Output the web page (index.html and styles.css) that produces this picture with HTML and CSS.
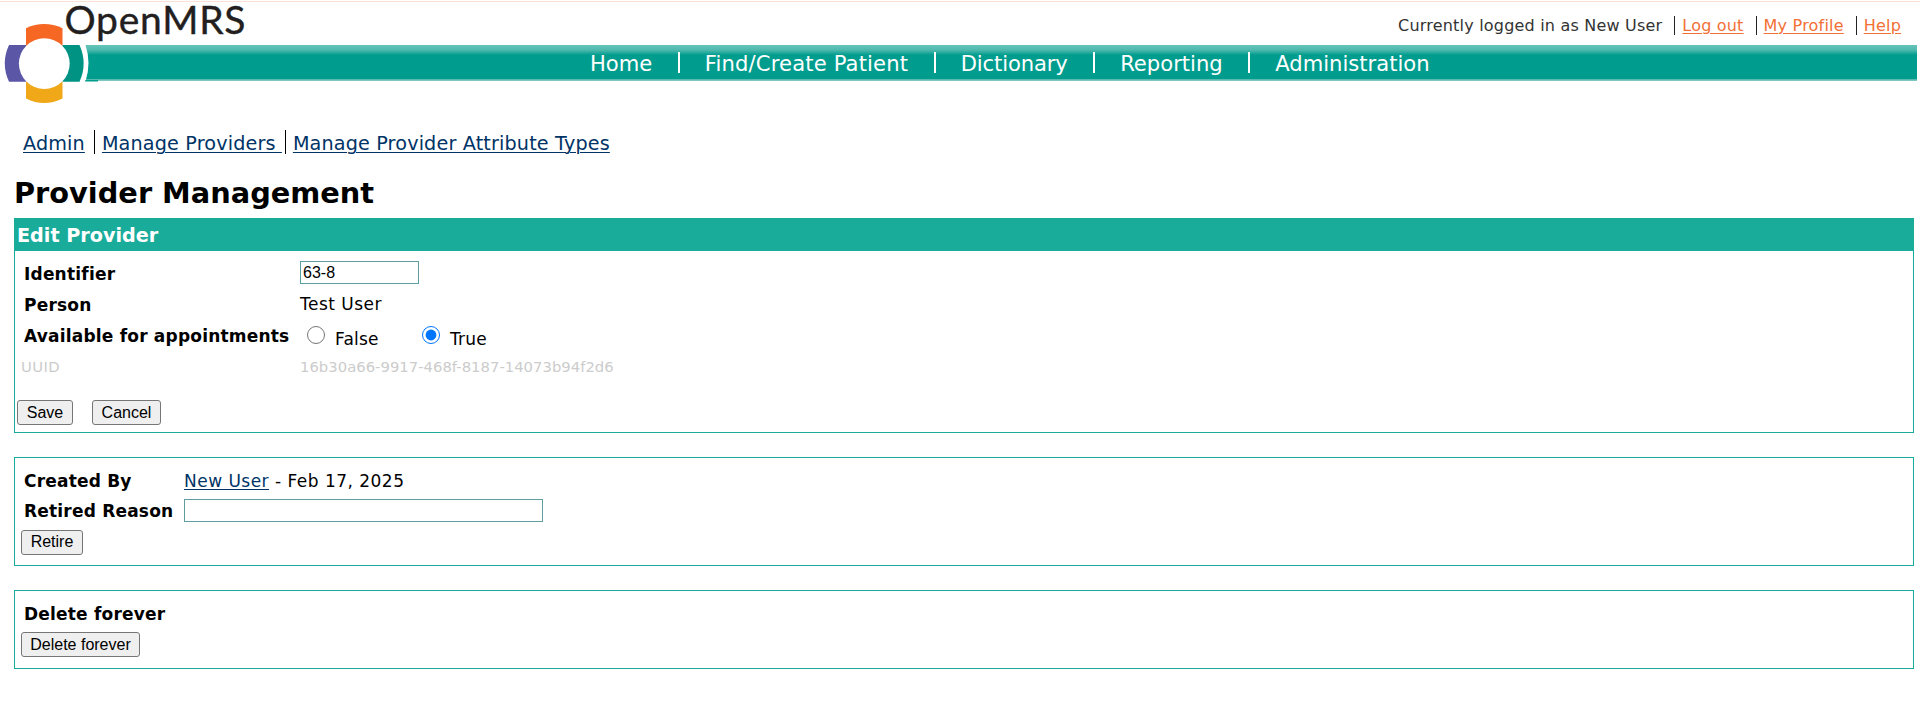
FILE: index.html
```html
<!DOCTYPE html>
<html lang="en">
<head>
    <meta charset="UTF-8">
    <meta name="viewport" content="width=device-width, initial-scale=1.0">
    <title>OpenMRS - Provider Management</title>
    <link rel="stylesheet" href="styles.css">
</head>
<body>
    <div class="page-header">
        <div class="user-bar">
            <span class="user-item">Currently logged in as New User</span>
            <span class="user-item"><a href="#">Log out</a></span>
            <span class="user-item"><a href="#">My Profile</a></span>
            <span class="user-item"><a href="#">Help</a></span>
        </div>

        <ul class="nav-bar">
            <li><a href="#">Home</a></li>
            <li class="nav-patient"><a href="#">Find/Create Patient</a></li>
            <li class="nav-dictionary"><a href="#">Dictionary</a></li>
            <li><a href="#">Reporting</a></li>
            <li><a href="#">Administration</a></li>
        </ul>

        <svg class="logo" width="250" height="110" viewBox="0 0 250 110">
            <path fill="#fff" d="M0 40H84.500L85.500 45Q91.500 63 85.500 81.500L84 84H0Z"/>
            <path fill="#009d8e" d="M85.500 80H98V81.500H85Z"/>
            <path fill="#f56723" d="M26 50V28.200Q44 19.800 62.500 28.200V50Z"/>
            <path fill="#f0a818" d="M26 78V98.500Q44 107.500 62.500 98.500V78Z"/>
            <path fill="#5b57a6" d="M26 45H9Q0.500 63.500 9 81.700H26Z"/>
            <path fill="#009384" d="M62.500 45H79.500Q87.800 63.500 79.500 81.700H62.500Z"/>
            <circle cx="44.300" cy="63.600" r="25.400" fill="#fff"/>
            <text class="logo-text" x="64.500" y="34.400" textLength="181">OpenMRS</text>
        </svg>
    </div>

    <div class="content">
        <ul class="menu">
            <li><a href="#">Admin</a></li>
            <li><a href="#">Manage Providers </a></li>
            <li><a href="#">Manage Provider Attribute Types</a></li>
        </ul>

        <h2>Provider Management</h2>

        <b class="box-header">Edit Provider</b>
        <form class="box edit-box">
            <div class="edit-grid">
                <label>Identifier</label>
                <div><input type="text" class="identifier" value="63-8"></div>
                <label>Person</label>
                <div class="value">Test User</div>
                <label class="available">Available for appointments</label>
                <div class="radios">
                    <input type="radio" name="available"><span>False</span>
                    <input type="radio" name="available" checked><span>True</span>
                </div>
                <div class="uuid uuid-label">UUID</div>
                <div class="uuid">16b30a66-9917-468f-8187-14073b94f2d6</div>
            </div>
            <div class="actions">
                <button type="button" class="save">Save</button>
                <button type="button" class="cancel">Cancel</button>
            </div>
        </form>

        <form class="box retire-box">
            <div class="retire-grid">
                <label>Created By</label>
                <div class="value"><a href="#">New User</a> - Feb 17, 2025</div>
                <label>Retired Reason</label>
                <div><input type="text" class="reason"></div>
            </div>
            <button type="button" class="retire">Retire</button>
        </form>

        <form class="box delete-box">
            <label>Delete forever</label>
            <button type="button" class="delete">Delete forever</button>
        </form>
    </div>
</body>
</html>
```
FILE: styles.css
```css
* {
    box-sizing: border-box;
}

body {
    margin: 0;
    font-family: Verdana, "DejaVu Sans", sans-serif;
    font-size: 17px;
    letter-spacing: 0.2px;
    line-height: 30px;
    color: #000;
    background: #fff;
}

ul {
    list-style: none;
    margin: 0;
    padding: 0;
}

a {
    color: #003366;
    text-underline-offset: 2px;
    text-decoration-thickness: 1px;
}

/* header */
.page-header {
    position: relative;
    height: 130px;
    padding-top: 1px;
}

.user-bar {
    display: flex;
    justify-content: flex-end;
    height: 44px;
    padding: 14px 19px 0 0;
    border-top: 1px solid #fbe0d4;
    font-size: 16px;
    line-height: 19px;
    color: #333;
}

.user-item {
    height: 19px;
    padding-right: 12px;
}

.user-item:last-child {
    padding-right: 0;
}

.user-item + .user-item {
    padding-left: 7px;
    border-left: 1px solid #222;
}

.user-item a {
    color: #f26f36;
}

.nav-bar {
    display: flex;
    justify-content: center;
    height: 36px;
    margin: 0 3px 0 85px;
    padding: 7px 0 0 18px;
    background: linear-gradient(#66c4ba 0, #4fb9ae 5px, #009d8e 10px, #009d8e 34px, #45b3a8 34px, #8fd0c9 36px);
    font-size: 21.1px;
    letter-spacing: 0;
    line-height: 23px;
}

.nav-bar li {
    height: 21px;
    padding: 0 25.5px 0 25px;
}

.nav-bar li + li {
    border-left: 2px solid #fff;
}

.nav-bar .nav-patient {
    letter-spacing: 0.15px;
}

.nav-bar .nav-dictionary {
    letter-spacing: -0.12px;
}

.nav-bar a {
    color: #fff;
    text-decoration: none;
}

.logo {
    position: absolute;
    left: 0;
    top: 0;
    overflow: visible;
}

.logo-text {
    font-family: Lato, sans-serif;
    font-size: 39px;
    letter-spacing: 0;
    fill: #231f20;
    stroke: #231f20;
    stroke-width: 0.4px;
}

/* content */
.content {
    padding: 0 6px 0 14px;
}

.menu {
    display: flex;
    padding-left: 9px;
    font-size: 19.2px;
    letter-spacing: 0.15px;
    line-height: 27px;
}

.menu li {
    height: 24px;
    padding-right: 9px;
    white-space: pre;
}

.menu li:nth-child(2) {
    padding-right: 3px;
}

.menu li + li {
    padding-left: 7px;
    border-left: 1px solid #000;
}

h2 {
    height: 64px;
    margin: 0;
    padding-top: 21px;
    font-size: 28.8px;
    letter-spacing: 0;
    line-height: 37px;
}

.box-header {
    display: block;
    height: 33px;
    padding-left: 3px;
    background: #1aac9b;
    color: #fff;
    font-size: 19.2px;
    letter-spacing: 0;
    line-height: 35px;
}

.box {
    border: 1px solid #1aac9b;
    margin-bottom: 24px;
}

label {
    display: block;
    padding-left: 3px;
    font-weight: bold;
}

.edit-box {
    height: 182px;
    border-top: 0;
    padding: 7px 2px 0;
}

.edit-grid {
    display: grid;
    grid-template-columns: 279px auto;
    grid-template-rows: 31px 29px 34px 27px;
    padding-left: 4px;
}

.edit-grid label {
    line-height: 32px;
}

.edit-grid .value {
    line-height: 31px;
}

.edit-grid .available {
    line-height: 36px;
}

.value {
    letter-spacing: 0.48px;
}

input[type="text"] {
    display: block;
    height: 23px;
    border: 1px solid #5f9ea0;
    padding: 0 2px;
    font: 16px Arial, "Liberation Sans", sans-serif;
}

.identifier {
    width: 119px;
    margin-top: 3px;
}

.radios {
    display: flex;
    align-items: flex-start;
}

.radios input {
    width: 18px;
    height: 18px;
    margin: 8px 10px 0 7px;
}

.radios span {
    width: 80px;
    padding-top: 6px;
}

.uuid {
    color: #ccc;
    font-size: 14.8px;
    letter-spacing: 0.02px;
    line-height: 29px;
}

.uuid-label {
    letter-spacing: 0.4px;
}

.actions {
    display: flex;
    gap: 19px;
    margin-top: 21px;
}

button {
    display: block;
    height: 25px;
    padding: 0;
    border: 1px solid #767676;
    border-radius: 3px;
    background: #efefef;
    color: #000;
    font: 16px/22px Arial, "Liberation Sans", sans-serif;
}

.save {
    width: 56px;
}

.cancel {
    width: 69px;
}

.retire-box {
    height: 109px;
    padding: 8px 6px 0;
}

.retire-grid {
    display: grid;
    grid-template-columns: 163px auto;
    grid-template-rows: 30px 30px;
}

.reason {
    width: 359px;
    margin-top: 3px;
}

.retire {
    width: 62px;
    margin-top: 4px;
    padding-bottom: 2px;
}

.delete-box {
    height: 79px;
    padding: 8px 6px 0;
    margin-bottom: 0;
}

.delete {
    width: 119px;
    margin-top: 3px;
}
```
